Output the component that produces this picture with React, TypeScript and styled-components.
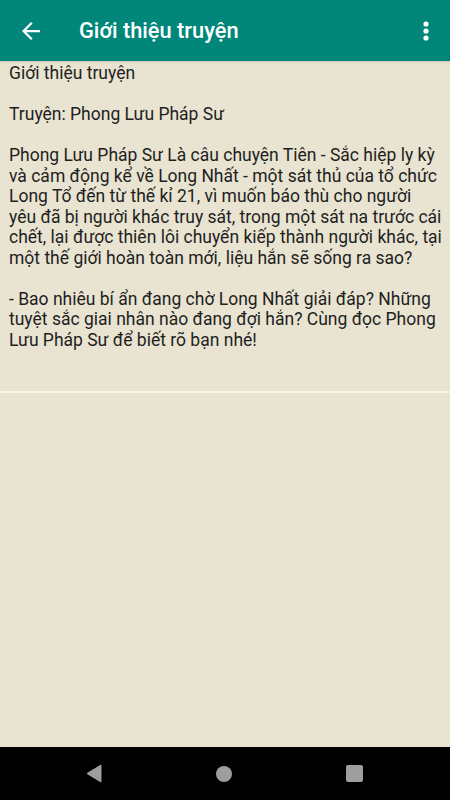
import React from 'react';
import styled, { createGlobalStyle } from 'styled-components';

const GlobalStyle = createGlobalStyle`
    html, body {
        margin: 0;
        padding: 0;
        height: 100%;
        background: #e9e3d1;
    }
    #root {
        height: 100%;
    }
`;

const Screen = styled.div`
    width: 450px;
    height: 800px;
    display: flex;
    flex-direction: column;
    background: #e9e3d1;
    font-family: Roboto, "Noto Sans", sans-serif;
    overflow: hidden;
`;

const Toolbar = styled.header`
    height: 61px;
    flex-shrink: 0;
    display: flex;
    align-items: center;
    background: #00877a;
    color: #fff;
    box-shadow: 0 1px 2px rgba(0, 0, 0, 0.15);
    position: relative;
    z-index: 1;
`;

const IconButton = styled.button`
    width: 62px;
    height: 61px;
    display: flex;
    align-items: center;
    justify-content: center;
    border: none;
    background: none;
    padding: 0;
    color: #fff;
    cursor: pointer;
`;

const MenuButton = styled(IconButton)`
    width: 48px;
    margin-left: auto;
`;

const Title = styled.h1`
    margin: 0 0 0 17px;
    font-size: 21.8px;
    font-weight: 500;
`;

const Content = styled.main`
    flex: 1;
    display: flex;
    flex-direction: column;
`;

const Intro = styled.p`
    margin: 0;
    padding: 2px 0 41px 9px;
    font-size: 17.5px;
    line-height: 20.5px;
    color: #1e1e1e;
    white-space: pre;
    border-bottom: 2px solid #f6f2e9;
`;

const NavBar = styled.nav`
    height: 53px;
    flex-shrink: 0;
    background: #000;
    display: flex;
    align-items: center;
    justify-content: center;
    gap: 90px;
    padding-right: 2px;
`;

const NavKey = styled.div`
    width: 40px;
    height: 40px;
    display: flex;
    align-items: center;
    justify-content: center;
`;

const lines = [
    'Giới thiệu truyện',
    '',
    'Truyện: Phong Lưu Pháp Sư',
    '',
    'Phong Lưu Pháp Sư Là câu chuyện Tiên - Sắc hiệp ly kỳ',
    'và cảm động kể về Long Nhất - một sát thủ của tổ chức',
    'Long Tổ đến từ thế kỉ 21, vì muốn báo thù cho người',
    'yêu đã bị người khác truy sát, trong một sát na trước cái',
    'chết, lại được thiên lôi chuyển kiếp thành người khác, tại',
    'một thế giới hoàn toàn mới, liệu hắn sẽ sống ra sao?',
    '',
    '- Bao nhiêu bí ẩn đang chờ Long Nhất giải đáp? Những',
    'tuyệt sắc giai nhân nào đang đợi hắn? Cùng đọc Phong',
    'Lưu Pháp Sư để biết rõ bạn nhé!',
];

const App: React.FC = () => {
    return (
        <Screen>
            <GlobalStyle />
            <Toolbar>
                <IconButton aria-label="back">
                    <svg width="18" height="18" viewBox="0 0 16 16">
                        <path d="M16 7H3.83l5.59-5.59L8 0 0 8l8 8 1.41-1.41L3.83 9H16z" fill="#fff" />
                    </svg>
                </IconButton>
                <Title>Giới thiệu truyện</Title>
                <MenuButton aria-label="more">
                    <svg width="6" height="20" viewBox="0 0 6 20">
                        <circle cx="3" cy="3" r="2.6" fill="#fff" />
                        <circle cx="3" cy="10" r="2.6" fill="#fff" />
                        <circle cx="3" cy="17" r="2.6" fill="#fff" />
                    </svg>
                </MenuButton>
            </Toolbar>
            <Content>
                <Intro>{lines.join('\n')}</Intro>
            </Content>
            <NavBar>
                <NavKey>
                    <svg width="16" height="19" viewBox="0 0 16 19">
                        <path d="M15 1v17L1 9.5z" fill="#9e9e9e" stroke="#9e9e9e" strokeLinejoin="round" strokeWidth="1" />
                    </svg>
                </NavKey>
                <NavKey>
                    <svg width="16" height="16" viewBox="0 0 16 16">
                        <circle cx="8" cy="8" r="8" fill="#9e9e9e" />
                    </svg>
                </NavKey>
                <NavKey>
                    <svg width="17" height="17" viewBox="0 0 17 17">
                        <rect x="0" y="0" width="17" height="17" rx="2" fill="#9e9e9e" />
                    </svg>
                </NavKey>
            </NavBar>
        </Screen>
    );
};

export default App;
